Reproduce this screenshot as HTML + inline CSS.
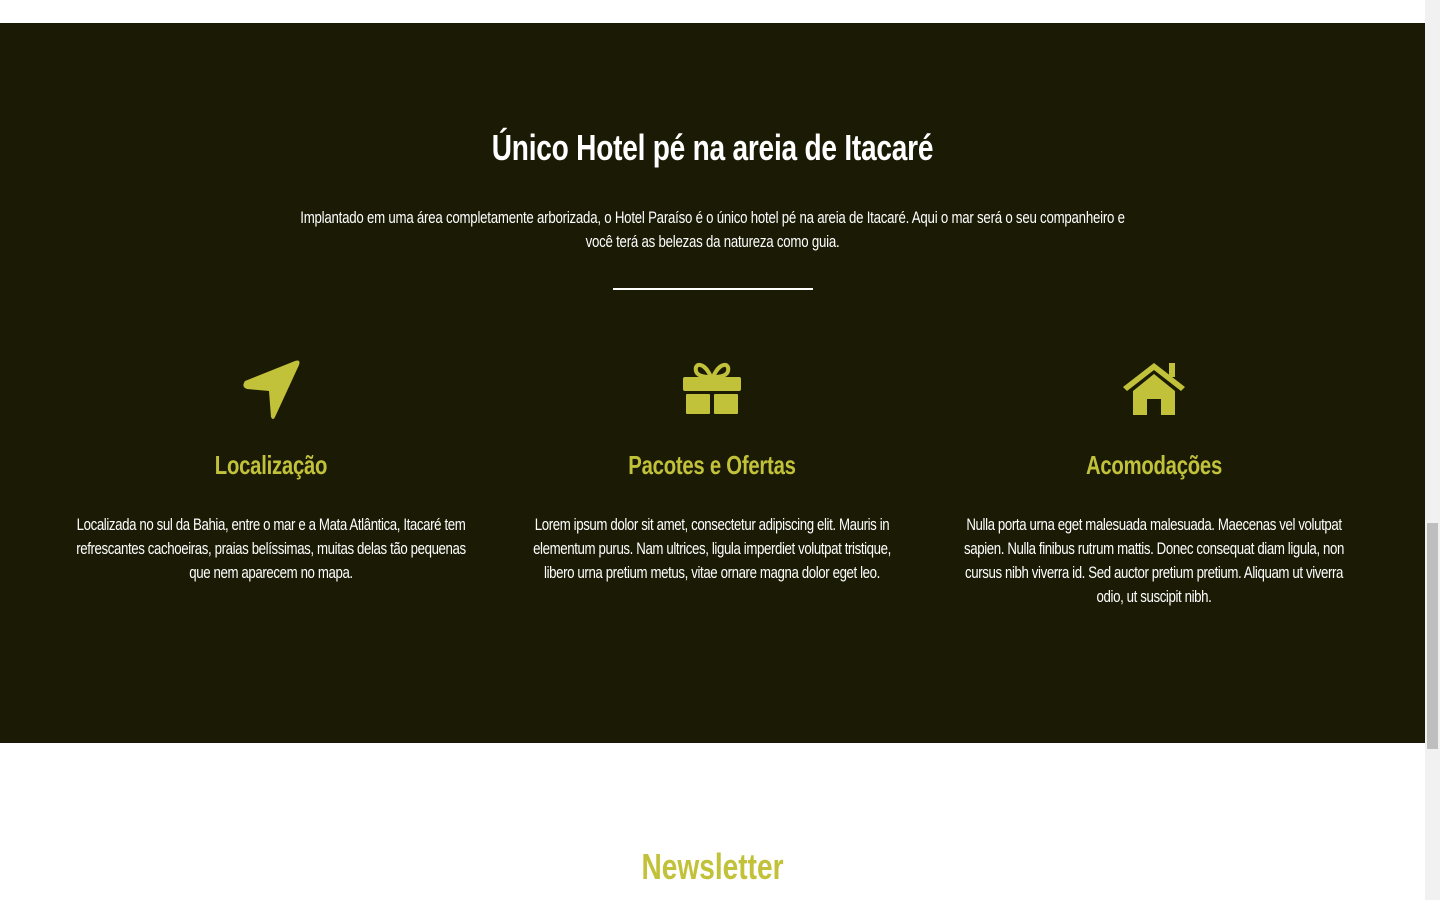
<!DOCTYPE html>
<html><head><meta charset="utf-8"><style>
*{margin:0;padding:0;box-sizing:border-box}
body{width:1440px;height:900px;overflow:hidden;background:#fff;font-family:"Liberation Sans",sans-serif;position:relative}
.sec{position:absolute;left:0;top:23px;width:1425px;height:720px;background:#1a1a05;color:#fff;text-align:center}
.n{transform:scaleX(0.78);transform-origin:center top}
h1{position:absolute;top:104px;left:0;width:1425px;font-size:36px;font-weight:bold;letter-spacing:-0.3px}
.intro{position:absolute;top:183px;left:175px;width:1075px;font-size:17px;line-height:24px;letter-spacing:-0.3px}
.line{position:absolute;top:265px;left:613px;width:200px;height:2px;background:#fff}
.col{position:absolute;top:336px;width:390px}
.col svg{display:block;margin:0 auto;height:62px}
.col h2{margin-top:29px;font-size:26px;color:#c2c23a;font-weight:bold;letter-spacing:-0.3px;white-space:nowrap;margin-left:-50px;margin-right:-50px}
.col p{margin-top:32px;font-size:17px;line-height:24px;letter-spacing:-0.5px;width:500px;margin-left:-55px}
.nl{position:absolute;top:846px;left:0;width:1425px;text-align:center;color:#c2c23a;font-size:36px;font-weight:bold}
.sb{position:absolute;right:0;top:0;width:15px;height:900px;background:#f1f1f1}
.th{position:absolute;right:2px;top:523px;width:11px;height:226px;background:#bebebe}
</style></head><body>
<div class="sec">
<h1 class="n">Único Hotel pé na areia de Itacaré</h1>
<p class="intro n">Implantado em uma área completamente arborizada, o Hotel Paraíso é o único hotel pé na areia de Itacaré. Aqui o mar será o seu companheiro e você terá as belezas da natureza como guia.</p>
<div class="line"></div>
<div class="col" style="left:76px">
<svg viewBox="0 0 60 62" width="60"><path d="M4 22 L54 2 Q60 0 58 6 L34 58 Q32 62 30 58 L28 32 L6 30 Q0 28 4 22Z" fill="#c2c23a"/></svg>
<h2 class="n">Localização</h2>
<p class="n">Localizada no sul da Bahia, entre o mar e a Mata Atlântica, Itacaré tem refrescantes cachoeiras, praias belíssimas, muitas delas tão pequenas que nem aparecem no mapa.</p></div>
<div class="col" style="left:517px">
<svg viewBox="0 0 60 62" width="60"><g fill="#c2c23a"><path d="M29 18 C22 2 12 4 14 12 C15 17 22 18 29 18Z M31 18 C38 2 48 4 46 12 C45 17 38 18 31 18Z" fill="none" stroke="#c2c23a" stroke-width="4"/><rect x="1" y="18" width="58" height="14" rx="2"/><rect x="4" y="35" width="24" height="20" rx="1"/><rect x="32" y="35" width="24" height="20" rx="1"/></g></svg>
<h2 class="n">Pacotes e Ofertas</h2>
<p class="n">Lorem ipsum dolor sit amet, consectetur adipiscing elit. Mauris in elementum purus. Nam ultrices, ligula imperdiet volutpat tristique, libero urna pretium metus, vitae ornare magna dolor eget leo.</p></div>
<div class="col" style="left:959px">
<svg viewBox="0 0 66 62" width="66"><g fill="#c2c23a"><path d="M2 28 L33 4 L64 28 L60 32 L33 11 L6 32Z"/><rect x="48" y="4" width="6" height="14"/><path d="M12 32 L33 15 L54 32 L54 56 L40 56 L40 40 L26 40 L26 56 L12 56Z"/></g></svg>
<h2 class="n">Acomodações</h2>
<p class="n">Nulla porta urna eget malesuada malesuada. Maecenas vel volutpat sapien. Nulla finibus rutrum mattis. Donec consequat diam ligula, non cursus nibh viverra id. Sed auctor pretium pretium. Aliquam ut viverra odio, ut suscipit nibh.</p></div>
</div>
<div class="nl n">Newsletter</div>
<div class="sb"><div class="th"></div></div>
</body></html>
